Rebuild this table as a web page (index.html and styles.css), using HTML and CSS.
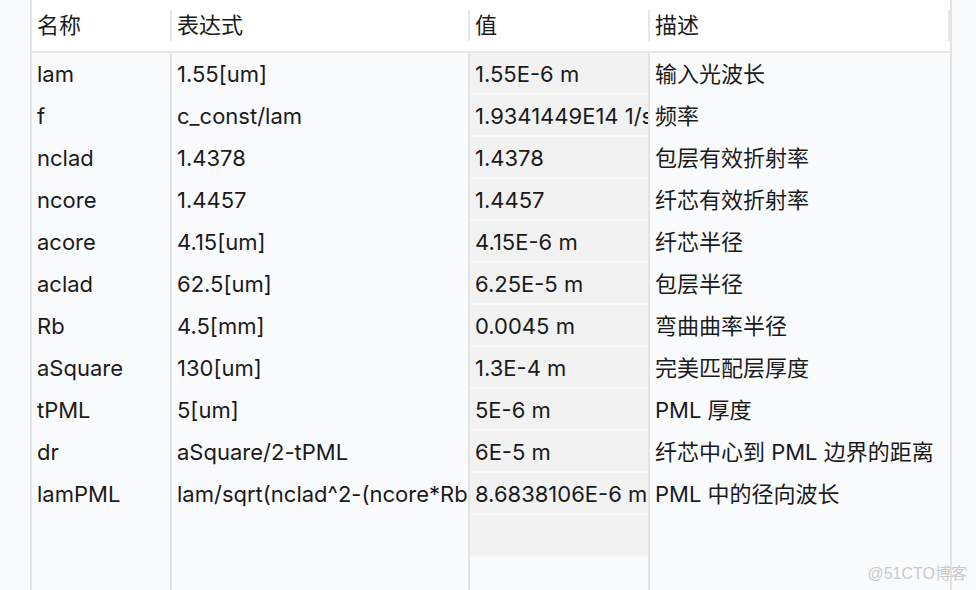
FILE: index.html
```html
<!DOCTYPE html>
<html lang="zh">
<head>
<meta charset="utf-8">
<title>参数</title>
<link rel="stylesheet" href="styles.css">
</head>
<body>
<div class="page">
  <div class="grid">
    <div class="hd">名称</div>
    <div class="hd">表达式</div>
    <div class="hd">值</div>
    <div class="hd last">描述</div>

    <div class="c">lam</div><div class="c">1.55[um]</div><div class="c v">1.55E-6 m</div><div class="c d">输入光波长</div>
    <div class="c">f</div><div class="c">c_const/lam</div><div class="c v">1.9341449E14 1/s</div><div class="c d">频率</div>
    <div class="c">nclad</div><div class="c">1.4378</div><div class="c v">1.4378</div><div class="c d">包层有效折射率</div>
    <div class="c">ncore</div><div class="c">1.4457</div><div class="c v">1.4457</div><div class="c d">纤芯有效折射率</div>
    <div class="c">acore</div><div class="c">4.15[um]</div><div class="c v">4.15E-6 m</div><div class="c d">纤芯半径</div>
    <div class="c">aclad</div><div class="c">62.5[um]</div><div class="c v">6.25E-5 m</div><div class="c d">包层半径</div>
    <div class="c">Rb</div><div class="c">4.5[mm]</div><div class="c v">0.0045 m</div><div class="c d">弯曲曲率半径</div>
    <div class="c">aSquare</div><div class="c">130[um]</div><div class="c v">1.3E-4 m</div><div class="c d">完美匹配层厚度</div>
    <div class="c">tPML</div><div class="c">5[um]</div><div class="c v">5E-6 m</div><div class="c d">PML 厚度</div>
    <div class="c">dr</div><div class="c">aSquare/2-tPML</div><div class="c v">6E-5 m</div><div class="c d">纤芯中心到 PML 边界的距离</div>
    <div class="c">lamPML</div><div class="c">lam/sqrt(nclad^2-(ncore*Rb/(Rb+dr))^2)</div><div class="c v">8.6838106E-6 m</div><div class="c d">PML 中的径向波长</div>

    <div class="c"></div><div class="c"></div><div class="c v"></div><div class="c d"></div>
    <div class="f"></div><div class="f"></div><div class="f"></div><div class="f d"></div>
  </div>
  <div class="mark">@51CTO博客</div>
</div>
</body>
</html>
```

FILE: styles.css
```css
html, body {
  margin: 0;
  padding: 0;
}
body {
  background: #f9fafc;
  font-family: "Inter", "Noto Sans CJK SC", sans-serif;
  color: #1a1a1a;
  overflow: hidden;
}
.page {
  position: relative;
  width: 976px;
  height: 590px;
  padding-left: 30px;
  box-sizing: border-box;
}
.grid {
  display: grid;
  grid-template-columns: 140px 298px 180px 300px;
  grid-template-rows: 53px repeat(12, 42px) 1fr;
  width: 922px;
  height: 590px;
  box-sizing: border-box;
  border-left: 2px solid #e3e3e4;
  border-right: 2px solid #e3e3e4;
  background: #fafbfd;
}
.hd {
  position: relative;
  background: #ffffff;
  border-bottom: 2px solid #e8e8e9;
  font-size: 22px;
  line-height: 51px;
  padding-left: 5px;
  white-space: nowrap;
  overflow: hidden;
}
.hd::after {
  content: "";
  position: absolute;
  right: 0;
  top: 10px;
  bottom: 10px;
  width: 2px;
  background: #e6e6e6;
}
.c, .f {
  border-right: 2px solid #e3e3e4;
  font-size: 22px;
  line-height: 42px;
  padding-left: 5px;
  white-space: nowrap;
  overflow: hidden;
}
.c.d, .f.d {
  border-right: none;
}
.c.v {
  background: #f2f2f2;
  box-shadow: inset 0 -2px 0 #f8f8f8;
}
.mark {
  position: absolute;
  right: 9px;
  bottom: 6px;
  font-family: "Liberation Sans", "Noto Sans CJK SC", sans-serif;
  font-size: 16px;
  color: #c9c9c9;
}
```
